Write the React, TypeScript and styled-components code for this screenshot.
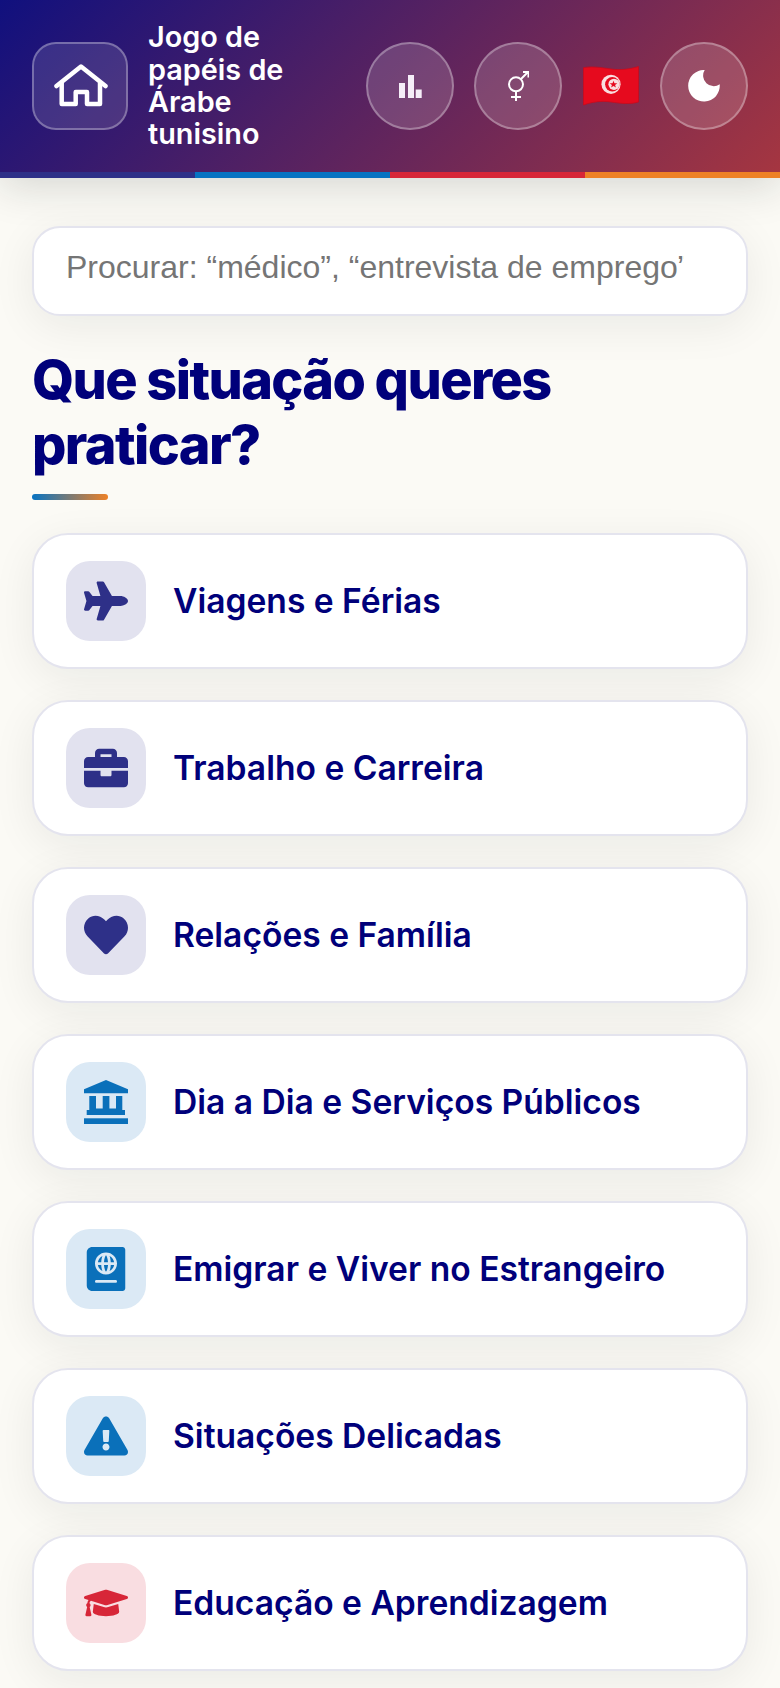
import React from 'react';
import styled, { createGlobalStyle } from 'styled-components';
import {
  FaPlane,
  FaBriefcase,
  FaHeart,
  FaPassport,
  FaExclamationTriangle,
  FaGraduationCap,
} from 'react-icons/fa';

const GlobalStyle = createGlobalStyle`
  html, body {
    margin: 0;
    padding: 0;
    height: 100%;
    background: #fbfaf5;
    overflow: hidden;
  }
  * {
    box-sizing: border-box;
  }
`;

type Tone = 'navy' | 'blue' | 'red';

const tones: Record<Tone, { bg: string; fg: string }> = {
  navy: { bg: '#e2e2ef', fg: '#2e3088' },
  blue: { bg: '#dbe9f5', fg: '#0a70ba' },
  red: { bg: '#f9dde1', fg: '#d72638' },
};

const LandmarkIcon = () => (
  <svg width="44" height="44" viewBox="0 0 44 44" fill="currentColor">
    <path d="M22 0 44 9.300V13.300H0V9.300Z" />
    <path d="M5.300 16H12V28.500H18.700V16H25.400V28.500H32V16H38.300V30H41V35H2.700V30H5.300Z" />
    <rect x="0" y="38.300" width="44" height="5.700" />
  </svg>
);

const categories: { label: string; tone: Tone; icon: React.ReactNode }[] = [
  { label: 'Viagens e Férias', tone: 'navy', icon: <FaPlane /> },
  { label: 'Trabalho e Carreira', tone: 'navy', icon: <FaBriefcase /> },
  { label: 'Relações e Família', tone: 'navy', icon: <FaHeart /> },
  { label: 'Dia a Dia e Serviços Públicos', tone: 'blue', icon: <LandmarkIcon /> },
  { label: 'Emigrar e Viver no Estrangeiro', tone: 'blue', icon: <FaPassport /> },
  { label: 'Situações Delicadas', tone: 'blue', icon: <FaExclamationTriangle /> },
  { label: 'Educação e Aprendizagem', tone: 'red', icon: <FaGraduationCap /> },
];

const HomeIcon = () => (
  <svg width="54" height="44" viewBox="0 0 54 44" fill="none" stroke="#fff" strokeWidth="4.500" strokeLinecap="round" strokeLinejoin="round">
    <path d="M2.500 22 27 2.500 51.500 22" />
    <path d="M7.700 19V40H21.700V28H33V40H46V19" />
  </svg>
);

const ChartIcon = () => (
  <svg width="23" height="23" viewBox="0 0 23 23" fill="#f5eef8">
    <rect x="0" y="8" width="6" height="15" />
    <rect x="9" y="0" width="6" height="23" />
    <rect x="16.700" y="14.500" width="6" height="8.500" />
  </svg>
);

const GenderIcon = () => (
  <svg width="21" height="30" viewBox="0 0 21 30" fill="none" stroke="#fff" strokeWidth="2">
    <circle cx="8" cy="13.300" r="7" />
    <path d="M8 20.300V30M3 26H13M13 8 20 1M15 1H20.500V6.500" />
  </svg>
);

const MoonIcon = () => (
  <svg width="32" height="32" viewBox="0 0 32 32">
    <path fill="#fff" d="M16.700 0A15.800 15.800 0 1 0 31.700 14.300A10.600 10.600 0 0 1 16.700 0Z" />
  </svg>
);

const TunisiaFlag = () => (
  <svg width="56" height="40" viewBox="0 0 56 40">
    <path
      fill="#e60a1e"
      stroke="#c90a1c"
      strokeWidth="0.800"
      d="M.5 1.700C9 0 18 1.500 28 3 38 4.500 47 3 55.500.5V36C47 38.500 38 37.500 28 36 18 34.500 9 36 .5 39Z"
    />
    <circle cx="28" cy="18.300" r="9.600" fill="#f9dfe0" />
    <circle cx="29.300" cy="18.300" r="7.200" fill="#e60a1e" />
    <circle cx="31" cy="18.300" r="5.600" fill="#f9dfe0" />
    <path fill="#e60a1e" d="m30.500 14.800 1 2.500 2.800-.1-2.200 1.700.8 2.700-2.400-1.500-2.400 1.500.8-2.700-2.200-1.700 2.800.1Z" />
  </svg>
);

const App: React.FC = () => {
  return (
    <Page>
      <GlobalStyle />
      <Header>
        <HeaderRow>
          <HomeButton aria-label="Início">
            <HomeIcon />
          </HomeButton>
          <Title>Jogo de papéis de Árabe tunisino</Title>
          <RoundButton aria-label="Estatísticas">
            <ChartIcon />
          </RoundButton>
          <RoundButton aria-label="Género">
            <GenderIcon />
          </RoundButton>
          <FlagSlot>
            <TunisiaFlag />
          </FlagSlot>
          <RoundButton aria-label="Tema">
            <MoonIcon />
          </RoundButton>
        </HeaderRow>
        <Stripe>
          <StripePart color="#2e3088" />
          <StripePart color="#0773c2" />
          <StripePart color="#d72638" />
          <StripePart color="#ee8126" />
        </Stripe>
      </Header>
      <Main>
        <SearchInput readOnly placeholder="Procurar: “médico”, “entrevista de emprego”, “restaurante”" />
        <Heading>Que situação queres praticar?</Heading>
        <HeadingRule />
        <CardList>
          {categories.map((c) => (
            <Card key={c.label}>
              <IconBox tone={c.tone}>{c.icon}</IconBox>
              <CardLabel>{c.label}</CardLabel>
            </Card>
          ))}
        </CardList>
      </Main>
    </Page>
  );
};

const Page = styled.div`
  width: 780px;
  height: 1688px;
  overflow: hidden;
  background: #fbfaf5;
  font-family: Inter, 'Liberation Sans', sans-serif;
`;

const Header = styled.header`
  position: relative;
  background: linear-gradient(135deg, #10107e 0%, #a63640 100%);
  box-shadow: 0 8px 40px rgba(20, 30, 30, 0.16);
`;

const HeaderRow = styled.div`
  display: flex;
  align-items: center;
  height: 172px;
  padding: 0 32px;
  gap: 20px;
`;

const HomeButton = styled.button`
  display: flex;
  align-items: center;
  justify-content: center;
  flex: none;
  width: 96px;
  height: 88px;
  padding: 0 0 0 2px;
  border-radius: 24px;
  border: 2px solid rgba(255, 255, 255, 0.3);
  background: rgba(255, 255, 255, 0.12);
`;

const Title = styled.h1`
  flex: 1;
  margin: 0;
  font-size: 28.8px;
  font-weight: 600;
  line-height: 32.4px;
  color: #fff;
`;

const RoundButton = styled.button`
  display: flex;
  align-items: center;
  justify-content: center;
  flex: none;
  width: 88px;
  height: 88px;
  padding: 0;
  border-radius: 50%;
  border: 2px solid rgba(255, 255, 255, 0.3);
  background: rgba(255, 255, 255, 0.15);
`;

const FlagSlot = styled.div`
  display: flex;
  justify-content: center;
  flex: none;
  width: 58px;
`;

const Stripe = styled.div`
  display: flex;
  height: 6px;
`;

const StripePart = styled.div<{ color: string }>`
  flex: 1;
  background: ${(p) => p.color};
`;

const Main = styled.main`
  padding: 48px 32px 0;
`;

const SearchInput = styled.input`
  display: block;
  width: 100%;
  height: 90px;
  padding: 0 62px 7px 32px;
  border: 2px solid #e4e4ee;
  border-radius: 28px;
  background: #fff;
  font-family: 'Liberation Sans', Arial, sans-serif;
  font-size: 32px;
  outline: none;
  box-shadow: 0 10px 44px rgba(20, 30, 30, 0.07);

  &::placeholder {
    color: #757575;
    opacity: 1;
  }
`;

const Heading = styled.h2`
  margin: 32px 0 0;
  font-size: 54px;
  font-weight: 800;
  line-height: 64.8px;
  letter-spacing: -1.6px;
  color: #00007a;
`;

const HeadingRule = styled.div`
  width: 76px;
  height: 6px;
  margin-top: 16px;
  border-radius: 3px;
  background: linear-gradient(90deg, #0773c2, #ee8126);
`;

const CardList = styled.div`
  display: flex;
  flex-direction: column;
  gap: 31px;
  margin-top: 33px;
`;

const Card = styled.div`
  display: flex;
  align-items: center;
  gap: 27px;
  padding: 26px 32px;
  border: 2px solid #e4e4ee;
  border-radius: 36px;
  background: #fff;
  box-shadow: 0 10px 44px rgba(20, 30, 30, 0.07);
`;

const IconBox = styled.div<{ tone: Tone }>`
  display: flex;
  align-items: center;
  justify-content: center;
  flex: none;
  width: 80px;
  height: 80px;
  border-radius: 24px;
  background: ${(p) => tones[p.tone].bg};
  color: ${(p) => tones[p.tone].fg};
  font-size: 44px;
`;

const CardLabel = styled.span`
  font-size: 33.6px;
  font-weight: 600;
  color: #00007a;
`;

export default App;
